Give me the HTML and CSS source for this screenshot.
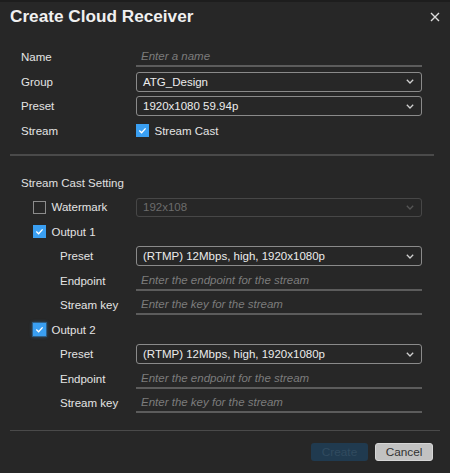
FILE: index.html
```html
<!DOCTYPE html>
<html>
<head>
<meta charset="utf-8">
<link rel="stylesheet" href="styles.css">
</head>
<body>
<div class="dialog">
  <div class="header">
    <div class="title">Create Cloud Receiver</div>
    <svg class="close" width="10" height="10" viewBox="0 0 10 10"><path d="M1 1 L9 9 M9 1 L1 9" stroke="#dcdcdc" stroke-width="1.4" fill="none"/></svg>
  </div>

  <div class="section s1">
    <div class="row">
      <div class="label">Name</div>
      <div class="line-input">Enter a name</div>
    </div>
    <div class="row">
      <div class="label">Group</div>
      <div class="select"><span>ATG_Design</span><svg class="chev" width="8" height="5" viewBox="0 0 8 5"><polyline points="0.8,0.8 4,4 7.2,0.8" fill="none" stroke="#cfcfcf" stroke-width="1.3"/></svg></div>
    </div>
    <div class="row">
      <div class="label">Preset</div>
      <div class="select"><span>1920x1080 59.94p</span><svg class="chev" width="8" height="5" viewBox="0 0 8 5"><polyline points="0.8,0.8 4,4 7.2,0.8" fill="none" stroke="#cfcfcf" stroke-width="1.3"/></svg></div>
    </div>
    <div class="row">
      <div class="label">Stream</div>
      <div class="check-wrap">
        <span class="cb on"><svg width="13" height="13" viewBox="0 0 13 13"><path d="M3.3 6.6 L5.6 8.8 L9.6 4.4" fill="none" stroke="#fff" stroke-width="1.4"/></svg></span>
        <span class="cb-label">Stream Cast</span>
      </div>
    </div>
  </div>

  <div class="sep sep1"></div>

  <div class="section s2">
    <div class="row heading">Stream Cast Setting</div>
    <div class="row">
      <div class="check-label">
        <span class="cb off"></span>
        <span class="cb-label">Watermark</span>
      </div>
      <div class="select disabled"><span>192x108</span><svg class="chev" width="8" height="5" viewBox="0 0 8 5"><polyline points="0.8,0.8 4,4 7.2,0.8" fill="none" stroke="#555" stroke-width="1.3"/></svg></div>
    </div>
    <div class="row">
      <div class="check-label">
        <span class="cb on"><svg width="13" height="13" viewBox="0 0 13 13"><path d="M3.3 6.6 L5.6 8.8 L9.6 4.4" fill="none" stroke="#fff" stroke-width="1.4"/></svg></span>
        <span class="cb-label">Output 1</span>
      </div>
    </div>
    <div class="row">
      <div class="label sub">Preset</div>
      <div class="select"><span>(RTMP) 12Mbps, high, 1920x1080p</span><svg class="chev" width="8" height="5" viewBox="0 0 8 5"><polyline points="0.8,0.8 4,4 7.2,0.8" fill="none" stroke="#cfcfcf" stroke-width="1.3"/></svg></div>
    </div>
    <div class="row">
      <div class="label sub">Endpoint</div>
      <div class="line-input">Enter the endpoint for the stream</div>
    </div>
    <div class="row">
      <div class="label sub">Stream key</div>
      <div class="line-input">Enter the key for the stream</div>
    </div>
    <div class="row">
      <div class="check-label">
        <span class="cb on focus"><svg width="13" height="13" viewBox="0 0 13 13"><path d="M3.3 6.6 L5.6 8.8 L9.6 4.4" fill="none" stroke="#fff" stroke-width="1.4"/></svg></span>
        <span class="cb-label">Output 2</span>
      </div>
    </div>
    <div class="row">
      <div class="label sub">Preset</div>
      <div class="select"><span>(RTMP) 12Mbps, high, 1920x1080p</span><svg class="chev" width="8" height="5" viewBox="0 0 8 5"><polyline points="0.8,0.8 4,4 7.2,0.8" fill="none" stroke="#cfcfcf" stroke-width="1.3"/></svg></div>
    </div>
    <div class="row">
      <div class="label sub">Endpoint</div>
      <div class="line-input">Enter the endpoint for the stream</div>
    </div>
    <div class="row">
      <div class="label sub">Stream key</div>
      <div class="line-input">Enter the key for the stream</div>
    </div>
  </div>

  <div class="sep sep2"></div>

  <div class="footer">
    <div class="btn create">Create</div>
    <div class="btn cancel">Cancel</div>
  </div>
</div>
</body>
</html>
```

FILE: styles.css
```css
html, body {
  margin: 0;
  padding: 0;
  background: #272727;
}
body {
  width: 450px;
  height: 473px;
  overflow: hidden;
  font-family: "Liberation Sans", Arial, sans-serif;
  font-size: 11.5px;
  color: #e4e4e4;
}
.dialog {
  border-top: 2px solid #1d1d1d;
  height: 471px;
  box-sizing: border-box;
}
.header {
  height: 28px;
  display: flex;
  align-items: center;
  justify-content: space-between;
  padding: 0 10px 0 10px;
}
.title {
  font-size: 17.2px;
  font-weight: bold;
  color: #f0f0f0;
  line-height: 28px;
}
.close {
  margin-right: 0;
  margin-top: 1px;
}
.section {
  padding: 0 28px 0 21px;
}
.s1 {
  padding-top: 14.75px;
}
.s1 .row {
  height: 24.5px;
}
.s2 {
  padding-top: 14px;
}
.s2 .row {
  height: 24.5px;
}
.row {
  display: flex;
  align-items: center;
}
.label {
  width: 115px;
  flex: none;
}
.label.sub {
  padding-left: 39px;
  box-sizing: border-box;
}
.heading {
  color: #e0e0e0;
}
.check-label {
  width: 115px;
  flex: none;
  box-sizing: border-box;
  padding-left: 12px;
  display: flex;
  align-items: center;
}
.check-wrap {
  display: flex;
  align-items: center;
}
.cb {
  width: 13px;
  height: 13px;
  flex: none;
  box-sizing: border-box;
  display: block;
}
.cb svg {
  display: block;
}
.cb.on {
  background: #3a9ff2;
}
.cb.off {
  border: 1.5px solid #8c8c8c;
}
.cb.focus {
  box-shadow: 0 0 0 1px rgba(58, 159, 242, 0.35), 0 0 3px 1px rgba(58, 159, 242, 0.35);
}
.cb-label {
  margin-left: 5.5px;
}
.select {
  flex: 1;
  height: 20px;
  box-sizing: border-box;
  border: 1px solid #8a8a8a;
  border-radius: 3px;
  display: flex;
  align-items: center;
  justify-content: space-between;
  padding: 0 7px 0 6px;
  color: #ececec;
}
.select.disabled {
  border-color: #474747;
  color: #6c6c6c;
  height: 19px;
}
.chev {
  display: block;
}
.line-input {
  flex: 1;
  height: 20px;
  box-sizing: border-box;
  border-bottom: 2px solid #5c5c5c;
  padding-left: 5px;
  font-style: italic;
  color: #7c7c7c;
  display: flex;
  align-items: center;
}
.sep {
  height: 0;
}
.sep1 {
  margin: 11.5px 16px 0 10px;
  border-top: 2px solid #4a4a4a;
}
.sep2 {
  margin: 14.5px 10px 0 10px;
  border-top: 1px solid #4a4a4a;
}
.footer {
  display: flex;
  justify-content: flex-end;
  gap: 7px;
  padding: 12px 17px 0 0;
}
.btn {
  height: 18px;
  box-sizing: border-box;
  border-radius: 3px;
  display: flex;
  align-items: center;
  justify-content: center;
  font-size: 11.8px;
}
.create {
  width: 57px;
  background: #203a4f;
  color: #314b5f;
}
.cancel {
  width: 58px;
  background: #c2c2c2;
  border: 1px solid #d6d6d6;
  color: #333;
}
```
